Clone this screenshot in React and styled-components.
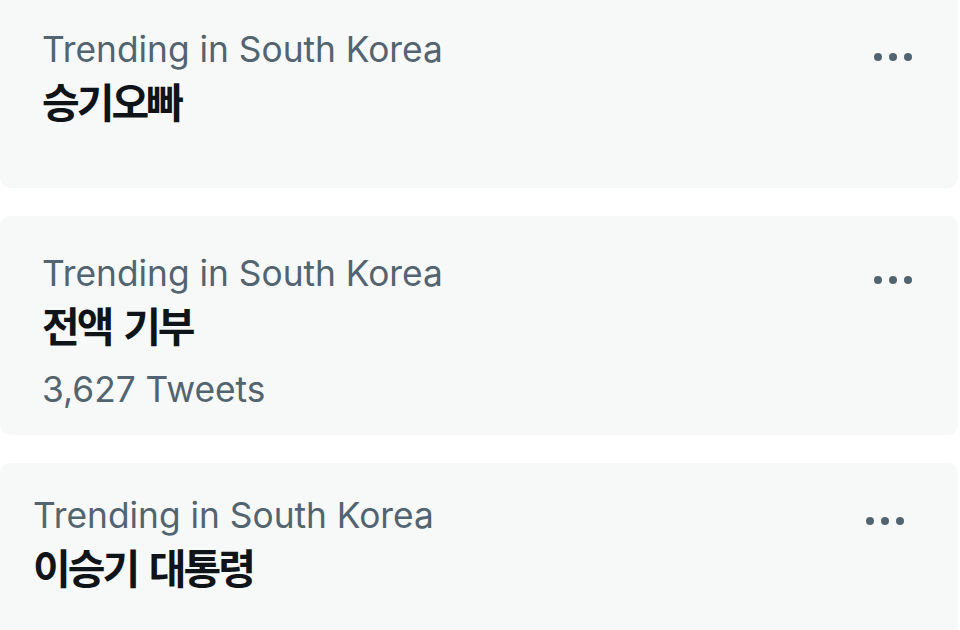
import React from "react";
import styled, { createGlobalStyle } from "styled-components";

const Global = createGlobalStyle`
  html, body { margin: 0; padding: 0; background: #ffffff; }
  body { font-family: Inter, "Noto Sans CJK KR", sans-serif; -webkit-font-smoothing: antialiased; }
`;

const List = styled.div`
  display: flex;
  flex-direction: column;
  gap: 28px;
  width: 958px;
`;

const Card = styled.div`
  display: flex;
  align-items: flex-start;
  background: #f7f9f9;
  border-radius: ${(p) => (p.$first ? "0 0 10px 10px" : "10px")};
  height: ${(p) => p.$h}px;
  box-sizing: border-box;
  padding: ${(p) => p.$pt}px ${(p) => p.$pr}px 0 ${(p) => p.$pl}px;
`;

const Body = styled.div`
  flex: 1;
  display: flex;
  flex-direction: column;
`;

const Meta = styled.div`
  font-family: Inter, "Noto Sans CJK KR", sans-serif;
  font-size: 35.3px;
  line-height: 44px;
  color: #536471;
`;

const Topic = styled.div`
  font-family: Inter, "Noto Sans CJK KR", sans-serif;
  font-weight: 700;
  font-size: 41px;
  line-height: 52px;
  letter-spacing: -3px;
  word-spacing: 5px;
  color: #0f1419;
  margin-top: 5px;
`;

const Count = styled(Meta)`
  margin-top: 15px;
`;

const More = styled.button`
  border: 0;
  background: transparent;
  padding: 0;
  margin-top: ${(p) => p.$mt}px;
  width: 38px;
  height: 8px;
  display: flex;
  cursor: pointer;
`;

const Dots = () => (
  <svg width="38" height="8" viewBox="0 0 38 8">
    <circle cx="4" cy="4" r="4" fill="#536471" />
    <circle cx="19" cy="4" r="4" fill="#536471" />
    <circle cx="34" cy="4" r="4" fill="#536471" />
  </svg>
);

const trends = [
  { topic: "승기오빠", h: 188, pt: 28, pl: 42, pr: 46, mt: 25, first: true },
  { topic: "전액 기부", count: "3,627 Tweets", h: 219, pt: 36, pl: 42, pr: 46, mt: 24 },
  { topic: "이승기 대통령", h: 200, pt: 31, pl: 33, pr: 54, mt: 23 },
];

export default function App() {
  return (
    <>
      <Global />
      <List>
        {trends.map((t, i) => (
          <Card key={i} $first={t.first} $h={t.h} $pt={t.pt} $pl={t.pl} $pr={t.pr}>
            <Body>
              <Meta>Trending in South Korea</Meta>
              <Topic>{t.topic}</Topic>
              {t.count && <Count>{t.count}</Count>}
            </Body>
            <More $mt={t.mt} aria-label="More">
              <Dots />
            </More>
          </Card>
        ))}
      </List>
    </>
  );
}
